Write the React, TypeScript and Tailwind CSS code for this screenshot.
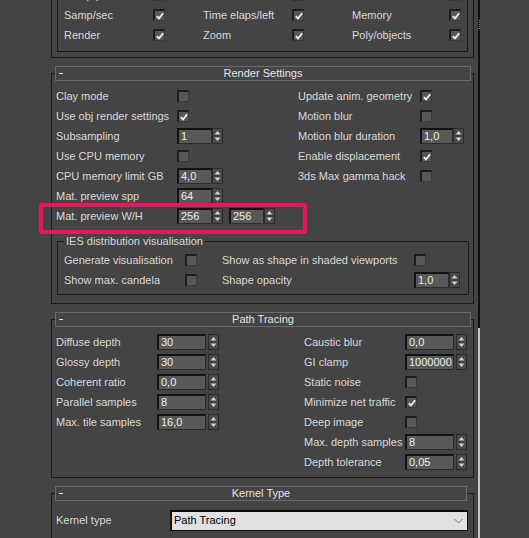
import React from 'react'

type RowProps = { label: string; labelW: string; children?: React.ReactNode }

function Check({ on = false }: { on?: boolean }) {
  return (
    <div className="w-[12px] h-[12px] shrink-0 bg-[#575757] border-t-2 border-l-2 border-r border-b border-t-[#1d1d1d] border-l-[#1d1d1d] border-r-[#3a3a3a] border-b-[#3a3a3a] flex items-center justify-center">
      {on && (
        <svg width="8" height="8" viewBox="0 0 8 8">
          <path d="M0.8 4.2 L3 6.4 L7.2 1.2" fill="none" stroke="#f2f2f2" strokeWidth="1.7" />
        </svg>
      )}
    </div>
  )
}

function Arrows() {
  return (
    <div className="w-[11px] h-[16px] shrink-0 bg-[#4a4a4a] border border-[#2a2a2a] flex items-center justify-center">
      <svg width="9" height="14" viewBox="0 0 9 14">
        <path d="M1.5 5.5 L4.5 2 L7.5 5.5 Z" fill="#d2d2d2" />
        <line x1="1" y1="7" x2="8" y2="7" stroke="#333" strokeWidth="1" />
        <path d="M1.5 8.5 L4.5 12 L7.5 8.5 Z" fill="#d2d2d2" />
      </svg>
    </div>
  )
}

function Spin({ value, field, gap }: { value: string; field: string; gap: string }) {
  return (
    <div className={`flex items-center ${gap}`}>
      <div
        className={`${field} h-[16px] shrink-0 bg-[#585858] border-t-2 border-l-2 border-r border-b border-t-[#121212] border-l-[#121212] border-r-[#2c2c2c] border-b-[#2c2c2c] text-[#ededed] pl-[2px] leading-[13px] overflow-hidden whitespace-nowrap`}
      >
        {value}
      </div>
      <Arrows />
    </div>
  )
}

function Row({ label, labelW, children }: RowProps) {
  return (
    <div className="h-[20px] flex items-center">
      <div className={`${labelW} shrink-0 whitespace-nowrap`}>{label}</div>
      {children}
    </div>
  )
}

function Header({ title, right = 'mr-[2px]' }: { title: string; right?: string }) {
  return (
    <div className={`relative -mt-[8px] ml-[3px] ${right} h-[15px] bg-[#444444] border border-[#6b6b6b] flex items-center`}>
      <div className="ml-[3px] w-[4px] h-[1px] bg-[#e0e0e0]" />
      <div className="absolute inset-0 flex items-center justify-center text-[#e4e4e4] leading-[13px]">{title}</div>
    </div>
  )
}

export default function App() {
  return (
    <div className="relative w-[529px] h-[538px] overflow-hidden bg-[#444444] text-[11px] text-[#d9d9d9] font-['Liberation_Sans',Arial,sans-serif]">
      <div className="flex h-full">
        <div className="w-[478px] shrink-0">
          {/* statistics rollout, scrolled off the top */}
          <div className="-mt-[17px] ml-[51px] w-[423px] border border-[#1a1a1a] pb-[5px]">
            <div className="mx-[5px] border border-[#1a1a1a] pl-[6px] pb-[6px]">
              {[
                ['Samp/px', 'Render time', 'Resolution'],
                ['Samp/sec', 'Time elaps/left', 'Memory'],
                ['Render', 'Zoom', 'Poly/objects'],
              ].map((r) => (
                <div key={r[0]} className="h-[20px] flex items-center">
                  <div className="w-[139px] flex items-center">
                    <div className="w-[89px]">{r[0]}</div>
                    <Check on />
                  </div>
                  <div className="w-[149px] flex items-center">
                    <div className="w-[89px] whitespace-nowrap">{r[1]}</div>
                    <Check on />
                  </div>
                  <div className="flex items-center">
                    <div className="w-[97px] whitespace-nowrap">{r[2]}</div>
                    <Check on />
                  </div>
                </div>
              ))}
            </div>
          </div>

          {/* Render Settings */}
          <div className="mt-[15px] ml-[51px] w-[423px] border border-[#1a1a1a] pb-[8px]">
            <Header title="Render Settings" />
            <div className="mt-[5px] pl-[4px] flex">
              <div className="w-[242px] shrink-0">
                <Row label="Clay mode" labelW="w-[121px]"><Check /></Row>
                <Row label="Use obj render settings" labelW="w-[121px]"><Check on /></Row>
                <Row label="Subsampling" labelW="w-[121px]"><Spin value="1" field="w-[35px]" gap="" /></Row>
                <Row label="Use CPU memory" labelW="w-[121px]"><Check /></Row>
                <Row label="CPU memory limit GB" labelW="w-[121px]"><Spin value="4,0" field="w-[35px]" gap="" /></Row>
                <Row label="Mat. preview spp" labelW="w-[121px]"><Spin value="64" field="w-[35px]" gap="" /></Row>
                <Row label="Mat. preview W/H" labelW="w-[121px]">
                  <Spin value="256" field="w-[35px]" gap="" />
                  <div className="ml-[6px]">
                    <Spin value="256" field="w-[35px]" gap="" />
                  </div>
                </Row>
              </div>
              <div>
                <Row label="Update anim. geometry" labelW="w-[122px]"><Check on /></Row>
                <Row label="Motion blur" labelW="w-[122px]"><Check /></Row>
                <Row label="Motion blur duration" labelW="w-[122px]"><Spin value="1,0" field="w-[33px]" gap="" /></Row>
                <Row label="Enable displacement" labelW="w-[122px]"><Check on /></Row>
                <Row label="3ds Max gamma hack" labelW="w-[122px]"><Check /></Row>
              </div>
            </div>

            <div className="mt-[15px] ml-[5px] mr-[4px] border border-[#1a1a1a] pb-[4px]">
              <div className="-mt-[8px] ml-[6px] w-fit px-[2px] h-[14px] leading-[14px] bg-[#444444]">
                IES distribution visualisation
              </div>
              <div className="pt-[2px] pl-[6px]">
                <div className="h-[20px] flex items-center">
                  <div className="w-[158px] flex items-center">
                    <div className="w-[121px]">Generate visualisation</div>
                    <Check />
                  </div>
                  <div className="w-[192px] whitespace-nowrap">Show as shape in shaded viewports</div>
                  <Check />
                </div>
                <div className="h-[20px] flex items-center">
                  <div className="w-[158px] flex items-center">
                    <div className="w-[121px]">Show max. candela</div>
                    <Check />
                  </div>
                  <div className="w-[192px] whitespace-nowrap">Shape opacity</div>
                  <Spin value="1,0" field="w-[35px]" gap="" />
                </div>
              </div>
            </div>
          </div>

          {/* Path Tracing */}
          <div className="mt-[15px] ml-[51px] w-[423px] border border-[#1a1a1a] pb-[5px]">
            <Header title="Path Tracing" />
            <div className="mt-[5px] pl-[4px] flex">
              <div className="w-[248px] shrink-0">
                <Row label="Diffuse depth" labelW="w-[101px]"><Spin value="30" field="w-[49px]" gap="gap-[2px]" /></Row>
                <Row label="Glossy depth" labelW="w-[101px]"><Spin value="30" field="w-[49px]" gap="gap-[2px]" /></Row>
                <Row label="Coherent ratio" labelW="w-[101px]"><Spin value="0,0" field="w-[49px]" gap="gap-[2px]" /></Row>
                <Row label="Parallel samples" labelW="w-[101px]"><Spin value="8" field="w-[49px]" gap="gap-[2px]" /></Row>
                <Row label="Max. tile samples" labelW="w-[101px]"><Spin value="16,0" field="w-[49px]" gap="gap-[2px]" /></Row>
              </div>
              <div>
                <Row label="Caustic blur" labelW="w-[101px]"><Spin value="0,0" field="w-[49px]" gap="gap-[2px]" /></Row>
                <Row label="GI clamp" labelW="w-[101px]"><Spin value="1000000,0" field="w-[49px]" gap="gap-[2px]" /></Row>
                <Row label="Static noise" labelW="w-[101px]"><Check /></Row>
                <Row label="Minimize net traffic" labelW="w-[101px]"><Check on /></Row>
                <Row label="Deep image" labelW="w-[101px]"><Check /></Row>
                <Row label="Max. depth samples" labelW="w-[101px]"><Spin value="8" field="w-[49px]" gap="gap-[2px]" /></Row>
                <Row label="Depth tolerance" labelW="w-[101px]"><Spin value="0,05" field="w-[49px]" gap="gap-[2px]" /></Row>
              </div>
            </div>
          </div>

          {/* Kernel Type */}
          <div className="mt-[15px] ml-[51px] w-[423px] border border-[#1a1a1a] pb-[8px]">
            <Header title="Kernel Type" right="mr-[6px]" />
            <div className="mt-[9px] pl-[4px] h-[20px] flex items-center">
              <div className="w-[114px] shrink-0">Kernel type</div>
              <div className="w-[298px] h-[21px] bg-[#e1e1e1] border-t-2 border-l-2 border-r border-b border-[#0e0e0e] flex items-center justify-between pl-[2px] pr-[4px] text-black">
                <span>Path Tracing</span>
                <svg width="9" height="6" viewBox="0 0 9 6">
                  <path d="M0.5 1 L4.5 5 L8.5 1" fill="none" stroke="#7a7a7a" strokeWidth="1" />
                </svg>
              </div>
            </div>
          </div>
        </div>

        {/* scrollbar */}
        <div className="w-[2px] shrink-0 flex flex-col">
          <div className="h-[328px] bg-[#111111] pt-[20px]">
            <div className="ml-[1px] w-[1px] h-[9px] bg-[repeating-linear-gradient(to_bottom,#8a8a8a_0_1px,transparent_1px_2px)]" />
          </div>
          <div className="flex-1 bg-[#c8c8c8]" />
        </div>
        <div className="flex-1" />
      </div>

      {/* annotation highlight */}
      <div className="absolute left-[39px] top-[203px] w-[268px] h-[31px] border-4 border-[#ec1660] rounded-[3px]" />
    </div>
  )
}
